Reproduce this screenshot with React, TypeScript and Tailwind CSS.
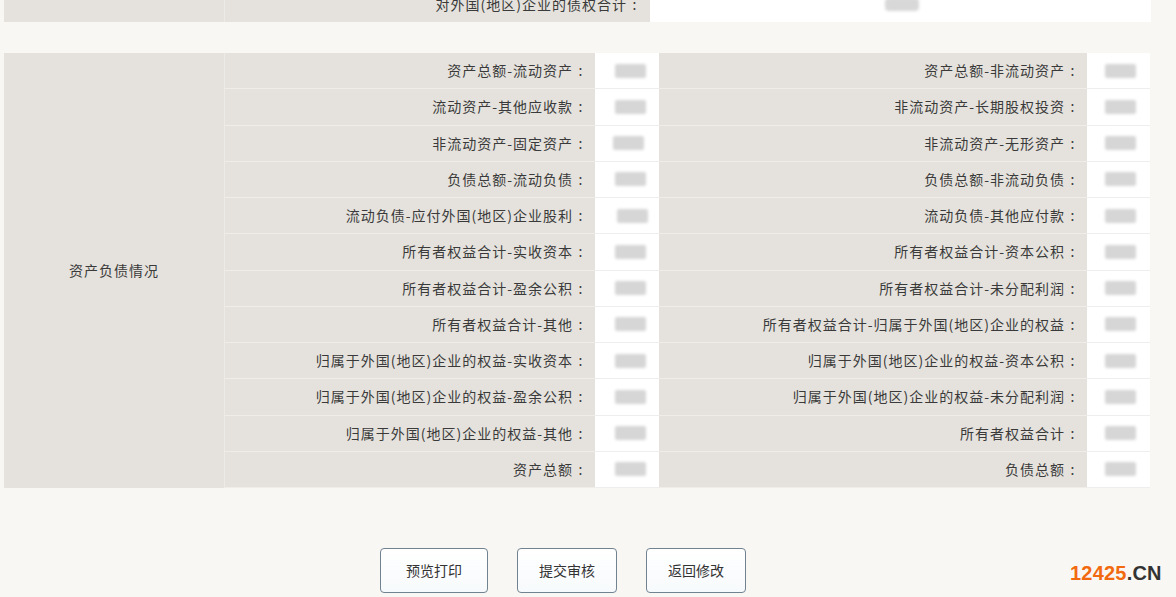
import React from 'react';

type Row = { left: string; right: string; lo: number; ro: number };

const rows: Row[] = [
  { left: '资产总额-流动资产', right: '资产总额-非流动资产', lo: 20, ro: 18 },
  { left: '流动资产-其他应收款', right: '非流动资产-长期股权投资', lo: 20, ro: 18 },
  { left: '非流动资产-固定资产', right: '非流动资产-无形资产', lo: 18, ro: 18 },
  { left: '负债总额-流动负债', right: '负债总额-非流动负债', lo: 20, ro: 18 },
  { left: '流动负债-应付外国(地区)企业股利', right: '流动负债-其他应付款', lo: 22, ro: 18 },
  { left: '所有者权益合计-实收资本', right: '所有者权益合计-资本公积', lo: 20, ro: 18 },
  { left: '所有者权益合计-盈余公积', right: '所有者权益合计-未分配利润', lo: 20, ro: 18 },
  { left: '所有者权益合计-其他', right: '所有者权益合计-归属于外国(地区)企业的权益', lo: 20, ro: 18 },
  { left: '归属于外国(地区)企业的权益-实收资本', right: '归属于外国(地区)企业的权益-资本公积', lo: 20, ro: 18 },
  { left: '归属于外国(地区)企业的权益-盈余公积', right: '归属于外国(地区)企业的权益-未分配利润', lo: 20, ro: 18 },
  { left: '归属于外国(地区)企业的权益-其他', right: '所有者权益合计', lo: 20, ro: 18 },
  { left: '资产总额', right: '负债总额', lo: 20, ro: 18 },
];

const font = { fontFamily: '"Noto Sans CJK SC", "Noto Sans", sans-serif' };

// full-width colon, centred in its own box like the original font does
const Colon = () => <span className="inline-block w-[15px] text-center tracking-normal">:</span>;

// masked value, the screenshot shows only a blurred grey patch
const Masked = ({ offset }: { offset: number }) => (
  <div className="h-full flex items-center bg-white border-b border-[#eeeeee]">
    <div
      className="h-[14px] w-[31px] bg-[#d6d6d6] blur-[1.5px] rounded-[2px]"
      style={{ marginLeft: offset }}
    />
  </div>
);

const Button = ({ label, width }: { label: string; width: string }) => (
  <button
    className={`${width} h-[45px] rounded-[4px] border border-[#718391] bg-gradient-to-b from-white to-[#f7fafc] text-[14px] text-[#333]`}
    style={font}
  >
    {label}
  </button>
);

export default function App() {
  return (
    <div
      className="w-[1176px] h-[597px] overflow-hidden bg-[#f9f7f3] text-[14px] tracking-[1px] text-[#3a3a3a] relative"
      style={font}
    >
      {/* tail of previous table, cut by the top of the window */}
      <div className="ml-[4px] mt-[-13px] w-[1147px] h-[35px] grid grid-cols-[221px_425px_1fr]">
        <div className="bg-[#e5e2dd] border-r border-[#eceae6]" />
        <div className="bg-[#e5e2dd] flex items-center justify-end pr-[8px]">
          对外国(地区)企业的债权合计<Colon />
        </div>
        <div className="bg-white flex items-center">
          <div className="ml-[235px] h-[13px] w-[34px] bg-[#d8d8d8] blur-[1.5px] rounded-[4px]" />
        </div>
      </div>

      <div className="ml-[4px] mt-[31px] w-[1146px] grid grid-cols-[221px_370px_64px_428px_63px] grid-rows-[repeat(12,36.25px)]">
        <div className="row-span-12 bg-[#e5e2dd] border-r border-[#ecebe7] flex items-center justify-center">
          资产负债情况
        </div>
        {rows.map((r, i) => (
          <React.Fragment key={i}>
            <div className="bg-[#e5e2dd] border-b border-[#efedea] flex items-center justify-end pr-[7px]">
              {r.left}
              <Colon />
            </div>
            <Masked offset={r.lo} />
            <div className="bg-[#e5e2dd] border-b border-[#efedea] flex items-center justify-end pr-[7px]">
              {r.right}
              <Colon />
            </div>
            <Masked offset={r.ro} />
          </React.Fragment>
        ))}
      </div>

      <div className="mt-[60px] ml-[380px] flex gap-[29px] tracking-normal">
        <Button label="预览打印" width="w-[108px]" />
        <Button label="提交审核" width="w-[100px]" />
        <Button label="返回修改" width="w-[100px]" />
      </div>

      <div
        className="absolute left-[1070px] top-[563px] text-[20px] font-bold leading-none tracking-[0.2px]"
        style={{ fontFamily: '"Liberation Sans", Arial, sans-serif' }}
      >
        <span className="text-[#f26a10]">12425</span>
        <span className="text-[#333]">.CN</span>
      </div>
    </div>
  );
}
